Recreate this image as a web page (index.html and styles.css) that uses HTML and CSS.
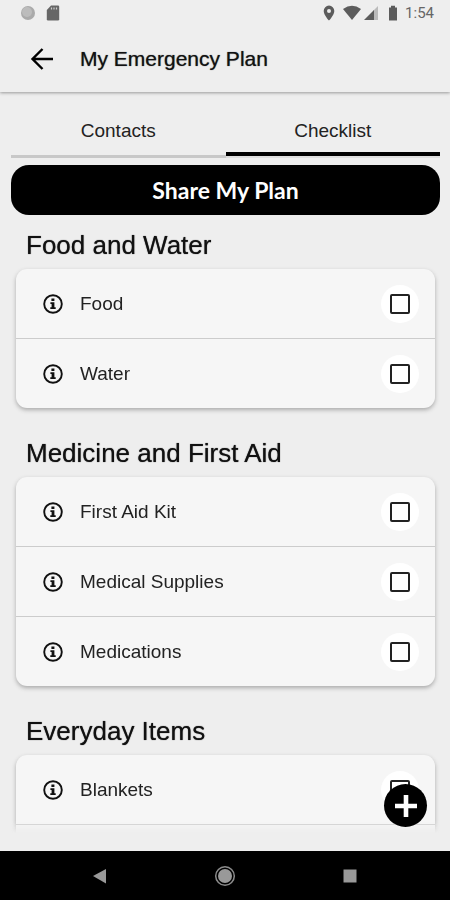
FILE: index.html
```html
<!DOCTYPE html>
<html lang="en">
<head>
<meta charset="utf-8">
<meta name="viewport" content="width=device-width, initial-scale=1">
<title>My Emergency Plan</title>
<link rel="stylesheet" href="styles.css">
</head>
<body>
<svg width="0" height="0" class="sprite" aria-hidden="true">
  <symbol id="info" viewBox="0 0 20 20">
    <circle cx="10" cy="10" r="8.800" fill="none" stroke="currentColor" stroke-width="1.900"/>
    <path fill="currentColor" d="M8.400 4.500h3v2.600h-3zM7.400 8.200h4v5h1.300v1.900H7.300v-1.900h1.300v-3.100H7.400z"/>
  </symbol>
</svg>
<header class="top">
  <div class="status">
    <svg width="16" height="16" viewBox="0 0 16 16"><circle cx="8" cy="8" r="7" fill="#aaa"/><circle cx="7" cy="7" r="5" fill="#bcbcbc"/></svg>
    <svg width="14" height="16" viewBox="0 0 14 16"><path fill="#666" d="M5 .5h7q1.200 0 1.200 1.200v12.600q0 1.200-1.200 1.200H2q-1.200 0-1.200-1.200V5z"/><path stroke="#ccc" stroke-width="1.200" d="M5.500 2.500v2M8 2.500v2M10.500 2.500v2"/></svg>
    <span class="spacer"></span>
    <svg width="12" height="16" viewBox="0 0 12 16"><path fill="#5c5c5c" fill-rule="evenodd" d="M6 .6A5.300 5.300 0 0 0 .7 5.900C.7 10 6 15.500 6 15.500S11.300 10 11.300 5.900A5.300 5.300 0 0 0 6 .6zm0 3.400a2 2 0 1 1 0 4 2 2 0 0 1 0-4z"/></svg>
    <svg class="wifi" width="18" height="16" viewBox="0 0 18 16"><path fill="#5c5c5c" d="M0 4Q9-2.500 18 4L9 15z"/></svg>
    <svg width="14" height="16" viewBox="0 0 14 16"><path fill="#bbb" d="M14 1v14H9V6z"/><path fill="#5c5c5c" d="M10 5v10H0z"/></svg>
    <svg class="battery" width="10" height="16" viewBox="0 0 10 16"><path fill="#5c5c5c" d="M3 .8h4v1.700h2v13H1v-13h2z"/></svg>
    <time>1:54</time>
  </div>
  <div class="appbar">
    <button class="back" type="button" aria-label="Back">
      <svg width="24" height="24" viewBox="0 0 24 24"><path fill="none" stroke="#000" stroke-width="2.400" d="M23 12H3M12.500 2L2.500 12l10 10"/></svg>
    </button>
    <h1>My Emergency Plan</h1>
  </div>
</header>
<main>
  <nav class="tabs">
    <a href="#contacts">Contacts</a>
    <a href="#checklist" class="active" aria-current="page">Checklist</a>
  </nav>
  <button class="share" type="button">Share My Plan</button>
  <div class="lists" id="checklist">
    <section>
      <h2>Food and Water</h2>
      <ul>
        <li><svg class="info"><use href="#info"/></svg><label for="food">Food</label><span class="halo"><input type="checkbox" id="food"></span></li>
        <li><svg class="info"><use href="#info"/></svg><label for="water">Water</label><span class="halo"><input type="checkbox" id="water"></span></li>
      </ul>
    </section>
    <section>
      <h2>Medicine and First Aid</h2>
      <ul>
        <li><svg class="info"><use href="#info"/></svg><label for="kit">First Aid Kit</label><span class="halo"><input type="checkbox" id="kit"></span></li>
        <li><svg class="info"><use href="#info"/></svg><label for="supplies">Medical Supplies</label><span class="halo"><input type="checkbox" id="supplies"></span></li>
        <li><svg class="info"><use href="#info"/></svg><label for="medications">Medications</label><span class="halo"><input type="checkbox" id="medications"></span></li>
      </ul>
    </section>
    <section>
      <h2>Everyday Items</h2>
      <ul>
        <li><svg class="info"><use href="#info"/></svg><label for="blankets">Blankets</label><span class="halo"><input type="checkbox" id="blankets"></span></li>
        <li></li>
      </ul>
    </section>
  </div>
  <button class="add" type="button" aria-label="Add item">
    <svg width="24" height="24" viewBox="0 0 24 24"><path stroke="#fff" stroke-width="4.600" d="M12 1v22M1 12h22"/></svg>
  </button>
</main>
<footer class="sysnav">
  <button type="button" aria-label="System back"><svg width="22" height="22" viewBox="0 0 22 22"><path fill="#999" d="M4 11L17 4v14.500z"/></svg></button>
  <button type="button" aria-label="Home"><svg width="22" height="22" viewBox="0 0 22 22"><circle cx="11" cy="11" r="9.300" fill="none" stroke="#8c8c8c" stroke-width="1.500"/><circle cx="11" cy="11" r="7" fill="#999"/></svg></button>
  <button type="button" aria-label="Recent apps"><svg width="22" height="22" viewBox="0 0 22 22"><path fill="#999" d="M4.500 4.500h13v13h-13z"/></svg></button>
</footer>
</body>
</html>
```
FILE: styles.css
```css
* { box-sizing: border-box; }
body {
  margin: 0;
  height: 100vh;
  display: flex;
  flex-direction: column;
  overflow: hidden;
  background: #eee;
  color: #111;
  font-family: "Liberation Sans", Arial, sans-serif;
}
button {
  padding: 0;
  border: 0;
  background: none;
  display: grid;
  place-items: center;
}
svg { display: block; flex: none; }
.sprite { position: absolute; }
.top { box-shadow: 0 1px 3px #999; }
.status {
  height: 26px;
  display: flex;
  align-items: center;
  padding: 0 16px 0 20px;
}
.status svg + svg { margin-left: 10px; }
.status .spacer { flex: 1; }
.status .wifi { margin-left: 8px; }
.status .wifi + svg { margin-left: 3px; }
.status time {
  margin-left: 7px;
  color: #666;
  font: 15px/20px Roboto, sans-serif;
}
.appbar {
  height: 66px;
  display: flex;
  align-items: center;
  padding-left: 30px;
  gap: 26px;
}
h1 {
  margin: 0;
  font-size: 21px;
  line-height: 28px;
  font-weight: 400;
  text-shadow: 0 0 1px #555;
}
main {
  position: relative;
  flex: 1;
  min-height: 0;
  display: flex;
  flex-direction: column;
  padding: 10px 10px 18px 11px;
}
.tabs {
  display: flex;
  flex: none;
  height: 56px;
  box-shadow: inset 0 -3px #c8c8c8;
}
.tabs a {
  flex: 1;
  display: grid;
  place-items: center;
  padding-top: 2px;
  color: #222;
  font-size: 19px;
  text-decoration: none;
}
.tabs .active { box-shadow: inset 0 -2px #ddd, inset 0 -6px #000; }
.share {
  flex: none;
  height: 50px;
  margin-top: 7px;
  border-radius: 18px;
  background: #000;
  color: #fff;
  font: 700 23px/30px Lato, sans-serif;
}
.lists {
  flex: 1;
  min-height: 0;
  overflow-y: auto;
  scrollbar-width: none;
  padding: 0 5px;
  -webkit-mask-image: linear-gradient(#000 calc(100% - 12px), transparent);
  mask-image: linear-gradient(#000 calc(100% - 12px), transparent);
}
section + section { margin-top: 15px; }
h2 {
  margin: 0;
  padding: 14px 10px 8px;
  font-size: 26px;
  line-height: 32px;
  font-weight: 400;
  text-shadow: 0 0 1px #333;
}
ul {
  margin: 0;
  padding: 0;
  list-style: none;
  border-radius: 11px;
  background: #f6f6f6;
  box-shadow: 0 2px 4px #aaa;
}
li {
  height: 69px;
  display: flex;
  align-items: center;
  padding: 0 16px 0 27px;
}
li + li {
  height: 70px;
  border-top: 1px solid #ccc;
}
.info { width: 20px; height: 20px; }
label {
  flex: 1;
  margin-left: 17px;
  color: #222;
  font-size: 19px;
  line-height: 24px;
}
.halo {
  width: 38px;
  height: 38px;
  display: grid;
  place-items: center;
  border-radius: 50%;
  background: #fff;
}
input {
  appearance: none;
  width: 20px;
  height: 20px;
  margin: 0;
  border: 2px solid #222;
  border-radius: 2px;
}
input:checked { background: #222; }
.add {
  position: absolute;
  right: 23px;
  bottom: 24px;
  width: 43px;
  height: 43px;
  border-radius: 50%;
  background: #000;
}
.sysnav {
  flex: none;
  height: 49px;
  display: flex;
  justify-content: center;
  gap: 103px;
  background: #000;
}
```
